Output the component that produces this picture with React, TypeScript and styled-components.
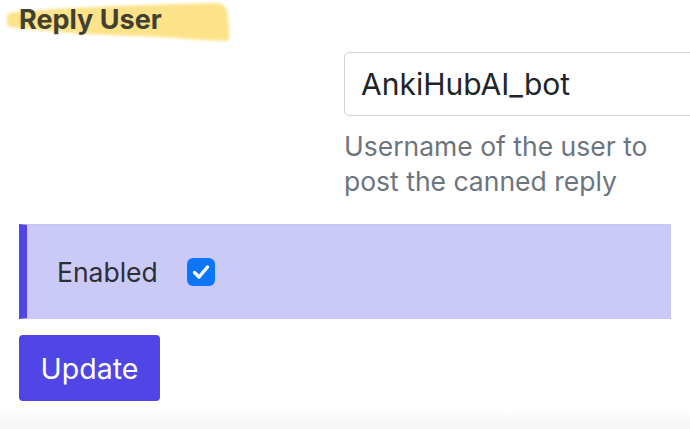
import React from "react";
import styled, { createGlobalStyle } from "styled-components";

const Global = createGlobalStyle`
  html, body { margin: 0; padding: 0; background: #ffffff; }
  body { font-family: Inter, "Noto Sans", "Liberation Sans", sans-serif; overflow: hidden; }
`;

const Page = styled.div`
  position: relative;
  width: 690px;
  height: 429px;
  overflow: hidden;
  padding-left: 19px;
  box-sizing: border-box;
  background: linear-gradient(to bottom, #ffffff 0, #ffffff 408px, #f5f5f6 429px);
`;

const HeadingWrap = styled.div`
  position: relative;
  height: 40px;
`;

const Highlight = styled.svg`
  position: absolute;
  left: -19px;
  top: 0;
  width: 240px;
  height: 48px;
  z-index: 0;
`;

const Heading = styled.h2`
  position: relative;
  z-index: 1;
  margin: 0;
  padding-top: 4px;
  font-size: 27px;
  line-height: 32px;
  font-weight: 700;
  color: #414031;
`;

const FieldRow = styled.div`
  display: flex;
  padding-left: 325px;
  margin-top: 12px;
`;

const Field = styled.div`
  display: flex;
  flex-direction: column;
`;

const TextInput = styled.input`
  width: 380px;
  height: 64px;
  box-sizing: border-box;
  border: 1px solid #ced4da;
  border-radius: 5px;
  padding: 0 16px;
  font-family: inherit;
  font-size: 30px;
  color: #212529;
  background: #fff;
  outline: none;
`;

const Help = styled.div`
  width: 345px;
  margin-top: 13px;
  font-size: 26.5px;
  line-height: 35px;
  color: #6c757d;
`;

const Callout = styled.div`
  display: flex;
  align-items: center;
  gap: 29px;
  width: 652px;
  height: 95px;
  margin-top: 25px;
  box-sizing: border-box;
  padding-left: 30px;
  background: #cbc9f6;
  border-left: 8px solid #4f46e5;
  border-top: 1px solid #c6c3f8;
  border-right: 1px solid #c6c3f8;
  border-bottom: 1px solid #c6c3f8;
`;

const Label = styled.label`
  font-size: 26.5px;
  color: #2b2e33;
`;

const CheckBox = styled.span`
  display: inline-flex;
  align-items: center;
  justify-content: center;
  width: 28px;
  height: 28px;
  border-radius: 6px;
  background: #0b76fb;
`;

const Button = styled.button`
  display: flex;
  align-items: center;
  justify-content: center;
  width: 141px;
  height: 66px;
  margin-top: 16px;
  border: none;
  border-radius: 4px;
  background: #4f46e5;
  color: #ffffff;
  font-family: inherit;
  font-size: 28.5px;
  padding: 0;
`;

export default function App() {
  return (
    <>
      <Global />
      <Page>
        <HeadingWrap>
          <Highlight viewBox="0 0 240 48">
            <defs>
              <filter id="soft" x="-5%" y="-20%" width="110%" height="140%">
                <feGaussianBlur stdDeviation="1.4" />
              </filter>
            </defs>
            <path
              d="M9 13 C 50 8, 130 5, 215 3 C 224 3, 228 8, 228 18 C 229 28, 230 36, 228 41 C 205 41, 175 37, 135 36 C 90 35, 45 31, 9 27 C 6 22, 6 17, 9 13 Z"
              fill="#fce38a"
              filter="url(#soft)"
            />
          </Highlight>
          <Heading>Reply User</Heading>
        </HeadingWrap>
        <FieldRow>
          <Field>
            <TextInput defaultValue="AnkiHubAI_bot" />
            <Help>Username of the user to post the canned reply</Help>
          </Field>
        </FieldRow>
        <Callout>
          <Label>Enabled</Label>
          <CheckBox>
            <svg width="20" height="18" viewBox="0 0 20 18">
              <path d="M3.5 9.5 L8 14 L16.5 4" fill="none" stroke="#fff" strokeWidth="3.4" strokeLinecap="round" strokeLinejoin="round" />
            </svg>
          </CheckBox>
        </Callout>
        <Button>Update</Button>
      </Page>
    </>
  );
}
